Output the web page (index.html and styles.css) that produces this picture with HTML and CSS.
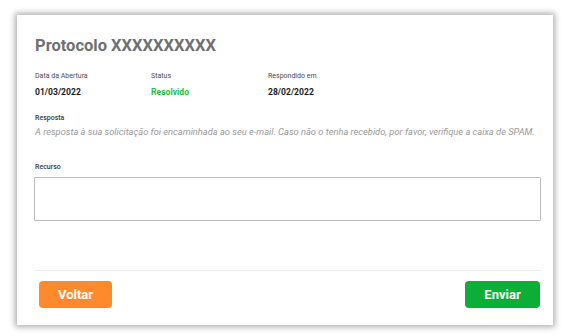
FILE: index.html
```html
<!DOCTYPE html>
<html lang="pt-BR">
<head>
    <meta charset="UTF-8">
    <meta name="viewport" content="width=device-width, initial-scale=1.0">
    <title>Protocolo</title>
    <link rel="stylesheet" href="styles.css">
</head>

<body>
    <div class="card">
        <h2 class="title">Protocolo XXXXXXXXXX</h2>

        <div class="info-row">
            <div class="info">
                <span class="label">Data da Abertura</span>
                <span class="value">01/03/2022</span>
            </div>
            <div class="info">
                <span class="label">Status</span>
                <span class="value status-ok">Resolvido</span>
            </div>
            <div class="info">
                <span class="label">Respondido em</span>
                <span class="value">28/02/2022</span>
            </div>
        </div>

        <div class="answer">
            <span class="label label-strong">Resposta</span>
            <p class="answer-text">A resposta à sua solicitação foi encaminhada ao seu e-mail. Caso não o tenha recebido, por favor, verifique a caixa de SPAM.</p>
        </div>

        <div class="appeal">
            <span class="label label-strong">Recurso</span>
            <textarea class="appeal-input"></textarea>
        </div>

        <div class="actions">
            <button class="btn btn-back">Voltar</button>
            <button class="btn btn-send">Enviar</button>
        </div>
    </div>
</body>
</html>
```

FILE: styles.css
```css
body {
    font-family: Roboto, "Noto Sans", sans-serif;
    margin: 0;
    padding: 15px 11px 11px 17px;
    background-color: #ffffff;
    color: #222;
}

.card {
    width: 536px;
    height: 310px;
    box-sizing: border-box;
    padding: 20px 12px 0 18px;
    background-color: #ffffff;
    box-shadow: 0 0 6px 2px rgba(0, 0, 0, 0.32);
    display: flex;
    flex-direction: column;
}

.title {
    margin: 0;
    font-size: 16.5px;
    line-height: 22px;
    font-weight: 700;
    color: #707070;
}

.info-row {
    display: grid;
    grid-template-columns: 116px 117px 116px;
    margin-top: 14px;
}

.info {
    display: flex;
    flex-direction: column;
    gap: 5px;
}

.label {
    font-size: 7px;
    line-height: 10px;
    color: #4a4a4a;
}

.label-strong {
    font-weight: 500;
    color: #3a3a3a;
}

.value {
    font-size: 8.6px;
    line-height: 12px;
    font-weight: 700;
    color: #1d1d1d;
}

.status-ok {
    color: #1fbf3a;
}

.answer {
    margin-top: 7px;
}

.answer-text {
    margin: 2px 0 0;
    font-size: 9.3px;
    line-height: 12px;
    font-style: italic;
    white-space: nowrap;
    color: #9a9a9a;
}

.appeal {
    margin-top: 24px;
    display: flex;
    flex-direction: column;
    gap: 5px;
}

.appeal-input {
    height: 44px;
    box-sizing: border-box;
    margin-left: -1px;
    border: 1px solid #bcbcbc;
    border-radius: 1px;
    resize: none;
}

.actions {
    margin-top: 49px;
    border-top: 1px solid #ececec;
    padding: 10px 1px 0 4px;
    display: flex;
    justify-content: space-between;
}

.btn {
    height: 27px;
    border: none;
    border-radius: 4px;
    font-family: inherit;
    font-size: 13px;
    font-weight: 700;
    color: #ffffff;
    cursor: pointer;
}

.btn-back {
    width: 73px;
    background-color: #ff8a2b;
}

.btn-send {
    width: 75px;
    background-color: #0bae37;
}
```
